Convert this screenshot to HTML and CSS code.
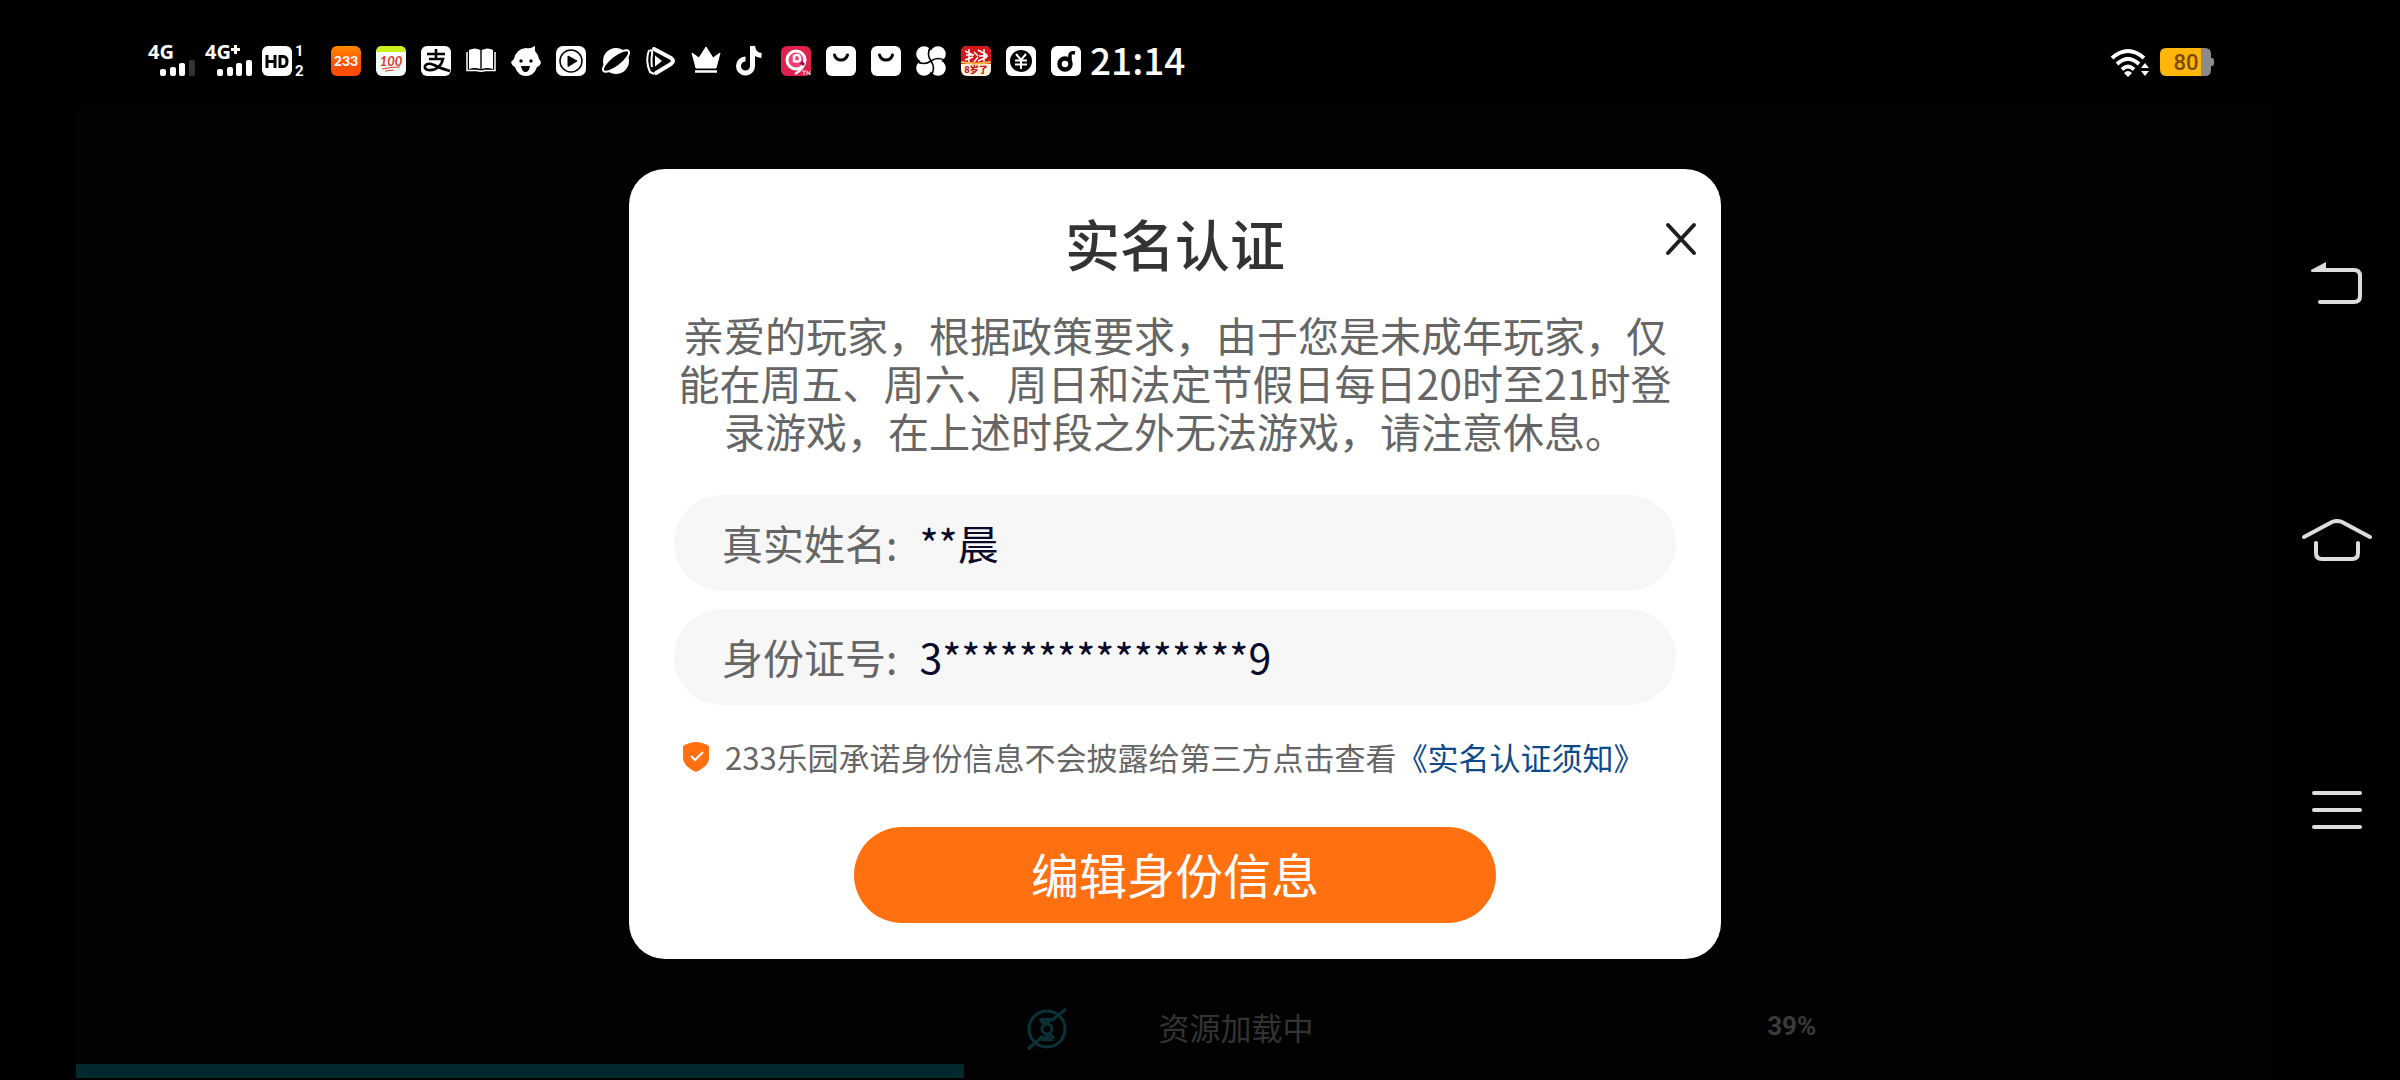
FILE: index.html
```html
<!DOCTYPE html>
<html lang="zh-CN">
<head>
<meta charset="utf-8">
<meta name="viewport" content="width=device-width, initial-scale=1">
<title>实名认证</title>
<link rel="stylesheet" href="styles.css">
</head>
<body>
<div class="screen">
  <header class="status">
    <div class="signals">
      <svg class="signal" viewBox="0 -6 48 44" aria-label="4G">
        <text x="0" y="16" class="net">4G</text>
        <g fill="#fff"><rect x="12" y="26" width="6" height="7" rx="2"/><rect x="22" y="24" width="6" height="9" rx="2"/><rect x="31" y="20" width="6" height="13" rx="2"/><rect x="41" y="17" width="6" height="16" rx="1" fill="#333"/></g>
      </svg>
      <svg class="signal" viewBox="0 -6 48 44" aria-label="4G+">
        <text x="0" y="16" class="net">4G</text><path d="M26 6.500h9M30.500 2v9" stroke="#fff" stroke-width="3"/>
        <g fill="#fff"><rect x="12" y="26" width="6" height="7" rx="2"/><rect x="22" y="24" width="6" height="9" rx="2"/><rect x="31" y="20" width="6" height="13" rx="2"/><rect x="41" y="17" width="6" height="16" rx="2"/></g>
      </svg>
      <svg class="hd" viewBox="0 -6 44 44" aria-label="HD">
        <rect y="3" width="30" height="30" rx="6" fill="#fff"/>
        <path d="M5 12v13M13 12v13M5 18.500h8M18 13.500h3q4 0 4 5t-4 5h-3z" fill="none" stroke="#000" stroke-width="3"/>
        <text x="33" y="13" class="sim">1</text><text x="33" y="33" class="sim">2</text>
      </svg>
    </div>
    <div class="apps">
      <svg viewBox="0 0 30 30"><defs><linearGradient id="o" x2="0" y2="1"><stop stop-color="#ff8a00"/><stop offset=".6" stop-color="#ff4d00"/></linearGradient></defs><rect width="30" height="30" rx="6" fill="url(#o)"/><text x="15" y="20" text-anchor="middle" class="t233">233</text></svg>
      <svg viewBox="0 0 30 30"><rect width="30" height="30" rx="6" fill="#f4fbfb"/><path d="M0 6q0-6 6-6h18q6 0 6 6z" fill="#c9f01c"/><text x="15" y="20" text-anchor="middle" class="t100">100</text><path d="M6 23q9-2 18-2M9 25l9-1" fill="none" stroke="#d9372a" stroke-width="1"/></svg>
      <svg viewBox="0 0 30 30"><rect width="30" height="30" rx="6" fill="#fff"/><path d="M6 8h18M15 3v10M8 13h14Q19 25 7 24q-4-1-3-4 2-4 9-1 8 4 16 6" fill="none" stroke="#000" stroke-width="2.600"/></svg>
      <svg viewBox="0 0 30 30"><path d="M3 4q6-3 11.300 0v19q-5-2-11.300 0zM15.700 4q6-3 11.300 0v19q-6-2-11.300 0z" fill="#fff"/><path d="M1 6v18.500h10q4 1.500 8 0h10V6" fill="none" stroke="#fff" stroke-width="1.500"/></svg>
      <svg viewBox="0 0 30 30"><path d="M3 13Q5 3 15 2q4 1 7-1l2-1v5q3 3 4 8 2 2 2 4-1 3-4 4-3 9-11 9T4 21q-3-1-4-5z" fill="#fff"/><circle cx="10" cy="15" r="1.700"/><circle cx="20" cy="15" r="1.700"/><path d="M10 20h9q-1 6-4.500 6T10 20z"/></svg>
      <svg viewBox="0 0 30 30"><rect width="30" height="30" rx="7" fill="#fff"/><circle cx="15" cy="15" r="11" fill="none" stroke="#000" stroke-width="1.500"/><path d="M12 10l9 5-9 5.500z" stroke="#000" stroke-linejoin="round"/></svg>
      <svg viewBox="0 0 30 30"><circle cx="15" cy="15" r="13" fill="#fff"/><ellipse cx="15" cy="15" rx="16" ry="5.500" transform="rotate(-38 15 15)" stroke="#fff" stroke-width="2"/></svg>
      <svg viewBox="0 0 30 30"><path d="M8 3l17 9q4 3 0 6L10 27" fill="none" stroke="#fff" stroke-width="4" stroke-linejoin="round" stroke-linecap="round"/><path d="M9 9.500v11l7-5.500z" fill="#fff"/><path d="M3 4q-4 11 1 22l4 2M4 4q3 1 2 4-1 8 0 13" fill="none" stroke="#fff" stroke-width="2"/></svg>
      <svg viewBox="0 0 30 30"><path d="M1 7l7 5 7-11 7 11 7-5-4 15H5z" fill="#fff" stroke="#fff" stroke-linejoin="round"/><path d="M4 25.500h22" stroke="#fff" stroke-width="2.500"/></svg>
      <svg viewBox="0 0 30 30"><path d="M16.500 0v20a7 7 0 1 1-7-7M16.500 0q1 9 9 9.500" fill="none" stroke="#fff" stroke-width="5"/></svg>
      <svg viewBox="0 0 30 30"><rect width="30" height="30" rx="6" fill="#e01f4c"/><circle cx="15" cy="14" r="9" fill="#f23d75" stroke="#fff" stroke-width="3"/><path d="M13 10q5-3 6 2t-6 3zM24 14q0 8-10 14" fill="none" stroke="#fff" stroke-width="2.500"/><path d="M20 16l3 3" stroke="#701a50" stroke-width="3"/><path d="M21 25h4m-2 0v4m3 0v-4l3 4v-4" fill="none" stroke="#ffd5dd"/></svg>
      <svg viewBox="0 0 30 30"><rect width="30" height="30" rx="6" fill="#fff"/><path d="M8.500 9q1.500 5 6.500 5t6.500-5" fill="none" stroke="#000" stroke-width="3" stroke-linecap="round"/></svg>
      <svg viewBox="0 0 30 30"><rect width="30" height="30" rx="6" fill="#fff"/><path d="M8.500 9q1.500 5 6.500 5t6.500-5" fill="none" stroke="#000" stroke-width="3" stroke-linecap="round"/></svg>
      <svg viewBox="0 0 30 30"><g fill="#fff"><circle cx="8" cy="8" r="7.800"/><circle cx="22" cy="8" r="7.800"/><circle cx="8" cy="22" r="7.800"/><circle cx="22" cy="22" r="7.800"/><circle cx="15" cy="15" r="6"/></g><path d="M15 15Q10 8 15 0M15 15q7-5 15 0M15 15q5 7 0 15M15 15q-7 5-15 0" fill="none" stroke="#000" stroke-width="1.600"/></svg>
      <svg viewBox="0 0 30 30"><rect width="30" height="30" rx="6" fill="#fff3df"/><path d="M0 18V6q0-6 6-6h18q6 0 6 6v12z" fill="#d61518"/><path d="M4 5l8 4M5 9h8M8 3v14M4 14l8-3M17 4l9 5M18 10h9M23 3v14M17 15l9-4M13 6l4 4M13 16l4-5" stroke="#fff" stroke-width="1.500"/><path d="M0 16q15 3 30 0" fill="none" stroke="#f0b54a" stroke-width="2"/><text x="15" y="27" text-anchor="middle" class="t8">8岁了</text></svg>
      <svg viewBox="0 0 30 30"><rect width="30" height="30" rx="6" fill="#fff"/><circle cx="15" cy="15" r="11"/><path d="M10 8l5 6 5-6M9 14.500h12M9 18.500h12M15 14v9" fill="none" stroke="#fff" stroke-width="2"/></svg>
      <svg viewBox="0 0 30 30"><rect width="30" height="30" rx="6" fill="#fff"/><circle cx="14" cy="18" r="5.500" fill="none" stroke="#000" stroke-width="4.500"/><path d="M19 17V9q0-3 5-2" fill="none" stroke="#000" stroke-width="3.500"/></svg>
    </div>
    <time class="clock">21:14</time>
    <div class="power">
      <svg class="wifi" viewBox="0 0 40 30" aria-label="Wi-Fi"><g fill="none" stroke="#fff" stroke-width="4"><path d="M2 10q16-14 32 0M7 16q11-10 22 0M12 21.500q6-6 12 0"/></g><path d="M14 25q4-4 8 0l-4 4zM31 20l4-5 4 5zM31 23h8l-4 5z" fill="#fff"/></svg>
      <svg class="battery" viewBox="0 0 54 28"><path d="M41 0h4q6 0 6 6v4h1q2 0 2 2v4q0 2-2 2h-1v4q0 6-6 6h-4z" fill="#8b8b8b"/><path d="M41 0H6Q0 0 0 6v15q0 7 6 7h35z" fill="#ffb60a"/><text x="26" y="22" text-anchor="middle" class="level">80</text></svg>
    </div>
  </header>

  <main class="stage">
    <section class="dialog" role="dialog" aria-labelledby="dialog-title">
      <div class="dialog-head">
        <h1 class="title" id="dialog-title">实名认证</h1>
        <button class="close" type="button" aria-label="关闭"><svg viewBox="0 0 30 30"><path d="M2 1l26 28M28 1L2 29" stroke="#1f1f1f" stroke-width="4" stroke-linecap="round"/></svg></button>
      </div>
      <form class="dialog-body">
        <p class="message">亲爱的玩家，根据政策要求，由于您是未成年玩家，仅能在周五、周六、周日和法定节假日每日20时至21时登录游戏，在上述时段之外无法游戏，请注意休息。</p>
        <div class="fields">
          <div class="field"><label for="real-name">真实姓名:</label><input id="real-name" type="text" value="**晨" readonly></div>
          <div class="field"><label for="id-number">身份证号:</label><input id="id-number" type="text" value="3****************9" readonly></div>
        </div>
        <p class="notice">
          <svg class="shield" viewBox="0 0 26 30"><path d="M0 4Q7 0 13 0t13 4v12q0 8-13 14Q0 24 0 16z" fill="#ff7110"/><path d="M8 14l4 4 8-8" fill="none" stroke="#fff" stroke-width="2"/></svg>
          <span>233乐园承诺身份信息不会披露给第三方点击查看<a href="#notice">《实名认证须知》</a></span>
        </p>
        <button class="submit" type="button">编辑身份信息</button>
      </form>
    </section>
    <div class="loading">
      <div class="loading-row">
        <svg class="emblem" viewBox="0 0 42 42"><g fill="none" stroke="#0b3238" stroke-width="3"><circle cx="21" cy="21" r="18"/><circle cx="21" cy="21" r="5"/><path d="M14 11q2 3 4 5M28 31q-2-3-4-5M40 1L25 13M17 28L2 41"/></g><path d="M14 10h14l-7 7zM14 33h14l-7-7z" fill="#0b3038"/></svg>
        <span class="loading-text">资源加载中</span>
        <span class="percent">39%</span>
      </div>
      <div class="track"><div class="bar"></div></div>
    </div>
  </main>

  <nav class="keys">
    <button type="button" aria-label="返回"><svg viewBox="0 0 72 48"><path d="M17 10h36q6 0 6 6v20q0 6-6 6H19" class="line"/><path d="M10 10l15-8v10H11q-2-1-1-2z" fill="#ddd"/></svg></button>
    <button type="button" aria-label="主页"><svg viewBox="0 0 72 48"><path d="M3 14L31 -1q5-2 10 0l28 15M15 20v10q0 6 6 6h30q6 0 6-6V20" class="line"/></svg></button>
    <button type="button" aria-label="最近任务"><svg viewBox="0 0 72 48"><path d="M13 7h46M13 24h46M13 41h46" class="line"/></svg></button>
  </nav>
</div>
</body>
</html>
```
FILE: styles.css
```css
* { box-sizing: border-box; }

body {
  margin: 0;
  background: #000;
  font-family: "Noto Sans CJK SC", sans-serif;
}

button {
  border: 0;
  padding: 0;
  background: none;
  font: inherit;
  cursor: pointer;
}

svg { display: block; flex: none; overflow: visible; }

.screen {
  display: grid;
  grid-template-columns: 76px minmax(0, 1fr) 126px;
  grid-template-rows: 108px minmax(0, 1fr);
  min-height: 100vh;
}

/* Status bar */
.status {
  grid-column: 1 / -1;
  display: flex;
  align-items: flex-start;
  padding: 37px 186px 0 148px;
}

.signals { display: flex; gap: 9px; }
.signal { width: 48px; height: 44px; }
.hd { width: 44px; height: 44px; }
.net { font: 700 20px "Open Sans", sans-serif; fill: #fff; }
.sim { font: 700 15px Roboto, sans-serif; fill: #fff; }

.apps {
  display: flex;
  gap: 15px;
  margin: 9px 0 0 25px;
}
.apps svg { width: 30px; height: 30px; }
.t233 { font: 900 14px Lato, sans-serif; fill: #fff; }
.t100 { font: italic 700 13px Lato, sans-serif; fill: #d9372a; }
.t8 { font: 900 9px "Noto Sans CJK SC", sans-serif; fill: #c51616; }

.clock {
  margin: 4px 0 0 9px;
  color: #fff;
  font-size: 37px;
  font-weight: 500;
  line-height: 36px;
}

.power {
  display: flex;
  gap: 10px;
  margin: 11px 0 0 auto;
}
.wifi { width: 40px; height: 30px; }
.battery { width: 54px; height: 28px; }
.level { font: 500 22px Roboto, sans-serif; fill: #7a4b00; }

/* Game area behind and around the dialog */
.stage {
  grid-column: 2;
  display: flex;
  flex-direction: column;
  align-items: center;
  padding-top: 61px;
  background: #020202;
}

.dialog {
  width: 100%;
  max-width: 1092px;
  padding-bottom: 36px;
  border-radius: 36px;
  background: #fff;
}

.dialog-head {
  display: grid;
  grid-template-columns: 64px 1fr 64px;
  align-items: start;
  padding: 38px 8px 0;
}
.title {
  grid-column: 2;
  margin: 0;
  color: #333;
  font-size: 55px;
  font-weight: 500;
  line-height: 70px;
  text-align: center;
}
.close {
  display: grid;
  place-items: center;
  height: 64px;
}
.close svg { width: 30px; height: 32px; }

.dialog-body { padding: 33px 45px 0; }

.message {
  margin: 0 0 41px;
  color: #666;
  font-size: 41px;
  line-height: 48px;
  text-align: center;
}

.fields { display: grid; gap: 18px; }
.field {
  display: flex;
  align-items: center;
  gap: 22px;
  height: 96px;
  padding: 0 48px 2px;
  border-radius: 48px;
  background: #f7f7f8;
  color: #666;
  font-size: 41px;
}
.field input {
  flex: 1;
  min-width: 0;
  padding: 0;
  border: 0;
  outline: 0;
  background: none;
  color: #0a0a2a;
  font: inherit;
}

.notice {
  display: flex;
  align-items: center;
  gap: 16px;
  margin: 30px 0 48px;
  padding-left: 9px;
  color: #666;
  font-size: 31px;
  line-height: 44px;
}
.notice a { color: #0c4a8a; text-decoration: none; }
.shield { width: 26px; height: 30px; }

.submit {
  display: block;
  width: 100%;
  max-width: 642px;
  height: 96px;
  margin: 0 auto;
  padding-bottom: 4px;
  border-radius: 48px;
  background: #ff7110;
  color: #fff;
  font-size: 48px;
}

.loading { width: 100%; margin-top: auto; padding-bottom: 2px; }
.loading-row {
  display: grid;
  grid-template-columns: 133fr 609fr 507fr;
  align-items: start;
  height: 42px;
  margin-bottom: 14px;
  padding-left: 43.2%;
  line-height: 38px;
}
.emblem { width: 42px; height: 42px; }
.loading-text { color: #333; font-size: 31px; }
.percent { color: #3a3a3a; font: 700 26px/36px Roboto, sans-serif; }
.track { height: 14px; }
.bar { width: 40.4%; height: 100%; background: #02292b; }

/* System navigation keys */
.keys {
  grid-column: 3;
  display: flex;
  flex-direction: column;
  align-items: center;
  justify-content: space-between;
  padding: 152px 0 246px;
}
.keys svg { width: 72px; height: 48px; }
.line {
  fill: none;
  stroke: #ddd;
  stroke-width: 4;
  stroke-linecap: round;
  stroke-linejoin: round;
}
```
